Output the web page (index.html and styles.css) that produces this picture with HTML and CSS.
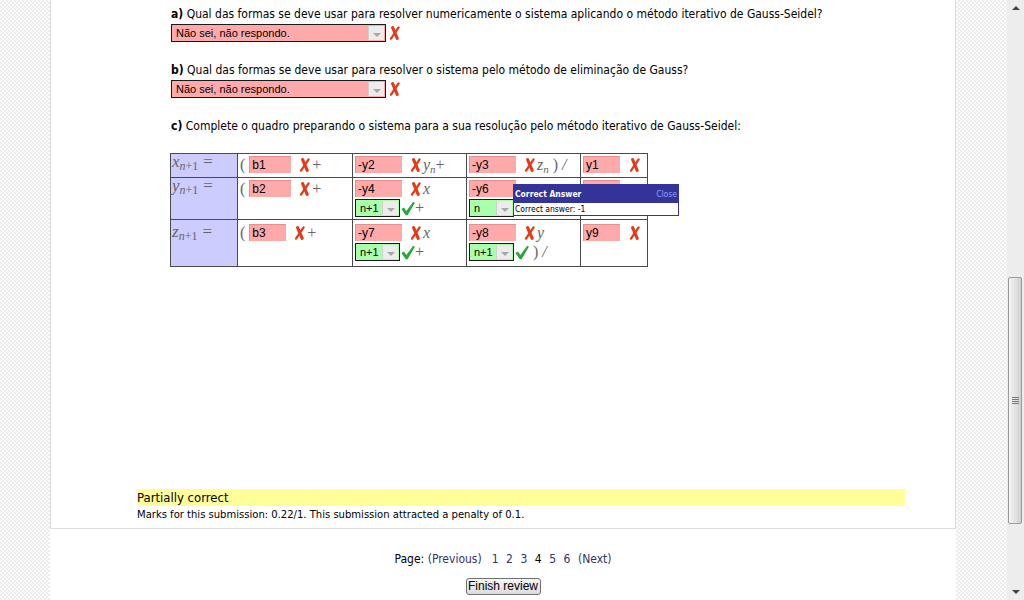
FILE: index.html
```html
<!DOCTYPE html>
<html lang="pt">
<head>
<meta charset="utf-8">
<title>Review</title>
<link rel="stylesheet" href="styles.css">
</head>
<body>
<svg class="defs" width="0" height="0" aria-hidden="true">
  <defs>
    <symbol id="ix" viewBox="0 0 11 14">
      <path d="M3.6 1.6 L8.2 12.4" stroke="#e43a18" stroke-width="3.1" stroke-linecap="round" fill="none"/>
      <path d="M9.6 1.4 L2.0 12.6" stroke="#e43a18" stroke-width="2.3" stroke-linecap="round" fill="none"/>
    </symbol>
    <symbol id="ic" viewBox="0 0 14 14">
      <path d="M0.4 7.4 L2.9 6.0 L5.4 9.4 L12.2 0.3 L13.9 1.2 L6.6 13.7 L4.7 13.7 Z" fill="#2aa63a"/>
    </symbol>
  </defs>
</svg>
<div class="gutter"></div>
<div class="page">
  <div class="que">
    <div class="formulation">
      <div class="part">
        <div class="qtext"><b>a)</b> Qual das formas se deve usar para resolver numericamente o sistema aplicando o método iterativo de Gauss-Seidel?</div>
        <div class="ansrow">
          <span class="sel sel-wide wrong"><span class="sel-txt">Não sei, não respondo.</span><span class="sel-arr"></span></span>
          <svg class="ic-x"><use href="#ix"/></svg>
        </div>
      </div>
      <div class="part">
        <div class="qtext"><b>b)</b> Qual das formas se deve usar para resolver o sistema pelo método de eliminação de Gauss?</div>
        <div class="ansrow">
          <span class="sel sel-wide wrong"><span class="sel-txt">Não sei, não respondo.</span><span class="sel-arr"></span></span>
          <svg class="ic-x"><use href="#ix"/></svg>
        </div>
      </div>
      <div class="part">
        <div class="qtext"><b>c)</b> Complete o quadro preparando o sistema para a sua resolução pelo método iterativo de Gauss-Seidel:</div>
      </div>
      <div class="tablewrap">
        <table class="grid">
          <tr class="r1">
            <td class="lhs"><span class="m"><i>x</i><sub><i>n</i>+1</sub><span class="eq">=</span></span></td>
            <td><div class="ln"><span class="m up par">(</span><span class="inp w42">b1</span><svg class="ic-x gap"><use href="#ix"/></svg><span class="m up">+</span></div></td>
            <td><div class="ln"><span class="inp w47">-y2</span><svg class="ic-x gap"><use href="#ix"/></svg><span class="m"><i>y</i><sub><i>n</i></sub></span><span class="m up">+</span></div></td>
            <td><div class="ln"><span class="inp w47">-y3</span><svg class="ic-x gap"><use href="#ix"/></svg><span class="m"><i>z</i><sub><i>n</i></sub></span><span class="m up">&nbsp;)</span><span class="m sl">&nbsp;/</span></div></td>
            <td><div class="ln"><span class="inp w37">y1</span><svg class="ic-x gap2"><use href="#ix"/></svg></div></td>
          </tr>
          <tr class="r2">
            <td class="lhs"><span class="m"><i>y</i><sub><i>n</i>+1</sub><span class="eq">=</span></span></td>
            <td><div class="ln"><span class="m up par">(</span><span class="inp w42">b2</span><svg class="ic-x gap"><use href="#ix"/></svg><span class="m up">+</span></div></td>
            <td>
              <div class="ln"><span class="inp w47">-y4</span><svg class="ic-x gap"><use href="#ix"/></svg><span class="m"><i>x</i></span></div>
              <div class="ln ln2"><span class="sel sel-sm right"><span class="sel-txt">n+1</span><span class="sel-arr"></span></span><svg class="ic-c"><use href="#ic"/></svg><span class="m up">+</span></div>
            </td>
            <td>
              <div class="ln"><span class="inp w47">-y6</span></div>
              <div class="ln ln2"><span class="sel sel-sm right"><span class="sel-txt">n</span><span class="sel-arr"></span></span></div>
            </td>
            <td><div class="ln"><span class="inp w37"></span></div></td>
          </tr>
          <tr class="r3">
            <td class="lhs"><span class="m"><i>z</i><sub><i>n</i>+1</sub><span class="eq">=</span></span></td>
            <td><div class="ln"><span class="m up par">(</span><span class="inp w37">b3</span><svg class="ic-x gap"><use href="#ix"/></svg><span class="m up">+</span></div></td>
            <td>
              <div class="ln"><span class="inp w47">-y7</span><svg class="ic-x gap"><use href="#ix"/></svg><span class="m"><i>x</i></span></div>
              <div class="ln ln2"><span class="sel sel-sm right"><span class="sel-txt">n+1</span><span class="sel-arr"></span></span><svg class="ic-c"><use href="#ic"/></svg><span class="m up">+</span></div>
            </td>
            <td>
              <div class="ln"><span class="inp w47">-y8</span><svg class="ic-x gap"><use href="#ix"/></svg><span class="m"><i>y</i></span></div>
              <div class="ln ln2"><span class="sel sel-sm right"><span class="sel-txt">n+1</span><span class="sel-arr"></span></span><svg class="ic-c"><use href="#ic"/></svg><span class="m up">&nbsp;)</span><span class="m sl">&nbsp;/</span></div>
            </td>
            <td><div class="ln"><span class="inp w37">y9</span><svg class="ic-x gap2"><use href="#ix"/></svg></div></td>
          </tr>
        </table>
        <div class="popup">
          <div class="popup-hd"><span class="popup-title">Correct Answer</span><span class="popup-close">Close</span></div>
          <div class="popup-bd">Correct answer: -1</div>
        </div>
      </div>
    </div>
    <div class="feedback">
      <div class="state">Partially correct</div>
      <div class="marks">Marks for this submission: 0.22/1. This submission attracted a penalty of 0.1.</div>
    </div>
  </div>
  <div class="nav">
    <div class="paging"><span class="lbl">Page:</span> <a class="lk">(Previous)</a><span class="sp"></span><a class="lk n">1</a><a class="lk n">2</a><a class="lk n">3</a><span class="cur n">4</span><a class="lk n">5</a><a class="lk n">6</a><a class="lk">(Next)</a></div>
    <div class="btnrow"><button class="btn" type="button">Finish review</button></div>
  </div>
</div>
<div class="gutter gutter-r"></div>
<div class="scrollbar">
  <div class="sb-arrow sb-up"></div>
  <div class="sb-track">
    <div class="sb-thumb"><span class="grip"></span></div>
  </div>
  <div class="sb-arrow sb-down"></div>
</div>
</body>
</html>
```

FILE: styles.css
```css
* { box-sizing: border-box; }
html, body { margin: 0; padding: 0; }
body {
  width: 1024px;
  height: 600px;
  overflow: hidden;
  display: flex;
  font-family: "DejaVu Sans Condensed", "DejaVu Sans", sans-serif;
  color: #000;
  background: #fff;
}
.defs { position: absolute; width: 0; height: 0; }

.gutter {
  width: 50px;
  flex: none;
  background: repeating-conic-gradient(#ececec 0 25%, #fbfbfb 0 50%) 0 0 / 4px 4px;
}
.gutter-r { width: 51px; }

.page {
  width: 906px;
  flex: none;
  background: #fff;
  display: flex;
  flex-direction: column;
}

.que {
  border: 1px solid #dcdcdc;
  border-top: none;
  padding: 6px 0 6px 0;
}
.formulation { padding-left: 120px; }
.part + .part { margin-top: 20px; }
.qtext {
  font-size: 12px;
  line-height: 16px;
  height: 16px;
  white-space: nowrap;
}
.qtext b { font-weight: bold; }
.ansrow {
  margin-top: 2px;
  display: flex;
  align-items: center;
  height: 18px;
}

.sel {
  display: inline-flex;
  align-items: stretch;
  border: 1px solid #1a1a1a;
  height: 18px;
  font-size: 11px;
  font-family: "Liberation Sans", Arial, sans-serif;
}
.sel.wrong { background: #ffaaaa; }
.sel.right { background: #aaffaa; }
.sel-wide { width: 215px; }
.sel-sm { width: 45px; }
.sel-txt {
  flex: 1;
  padding-left: 4px;
  line-height: 16px;
  white-space: nowrap;
  overflow: hidden;
}
.sel-arr {
  width: 16px;
  flex: none;
  background: #ececec;
  border-left: 1px solid #d0d0d0;
  margin: 1px;
  position: relative;
}
.sel-arr::after {
  content: "";
  position: absolute;
  left: 4px;
  top: 7px;
  border-left: 4px solid transparent;
  border-right: 4px solid transparent;
  border-top: 4px solid #a8a8a8;
}

.ic-x { width: 11px; height: 14px; flex: none; margin-left: 3px; }
.ic-c { width: 14px; height: 15px; flex: none; margin-left: 1px; }

.tablewrap { position: relative; margin-top: 19px; margin-left: -1px; width: 478px; }
.grid {
  border-collapse: collapse;
  font-size: 12px;
}
.grid td {
  border: 1px solid #4a4a4a;
  vertical-align: top;
  padding: 2px 2px 2px 2px;
}
.grid td:nth-child(1) { width: 67px; }
.grid td:nth-child(2) { width: 115px; }
.grid td:nth-child(3) { width: 114px; }
.grid td:nth-child(4) { width: 114px; }
.grid td:nth-child(5) { width: 67px; }
.grid tr.r1 td { height: 24px; }
.grid tr.r2 td { height: 42px; }
.grid tr.r3 td { height: 47px; }
.grid tr.r3 td { padding-top: 4px; }
.grid td.lhs { background: #ccccff; padding-top: 0; padding-left: 1px; }

.m {
  font-family: "Liberation Serif", "Times New Roman", serif;
  color: #666;
  font-size: 16px;
  line-height: 16px;
  white-space: nowrap;
}
.m i { font-style: italic; }
.m sub { font-size: 11px; vertical-align: -3px; line-height: 0; }
.m .eq { margin-left: 5px; font-size: 17px; }
.m.sl { font-style: italic; }
.lhs .m { font-size: 17px; }
.lhs .m sub { font-size: 12px; }
.par { margin-right: 4px; }

.ln {
  display: flex;
  align-items: center;
  height: 17px;
  white-space: nowrap;
}
.ln2 { margin-top: 2px; height: 18px; }

.inp {
  display: inline-block;
  height: 17px;
  background: #ffaaaa;
  border-top: 1px solid #e88e8e;
  border-left: 1px solid #e88e8e;
  font-size: 12px;
  line-height: 16px;
  padding-left: 2px;
  font-family: "Liberation Sans", Arial, sans-serif;
}
.w42 { width: 42px; }
.w47 { width: 47px; }
.w37 { width: 37px; }
.gap { margin-left: 8px; margin-right: 2px; }
.gap2 { margin-left: 9px; }

.popup {
  position: absolute;
  left: 343px;
  top: 31px;
  width: 166px;
  border: 1px solid #333399;
  background: #fff;
  font-family: "DejaVu Sans Condensed", "DejaVu Sans", sans-serif;
}
.popup-hd {
  background: #333399;
  height: 18px;
  display: flex;
  align-items: center;
  justify-content: space-between;
  padding: 0 1px 0 1px;
}
.popup-title { color: #fff; font-weight: bold; font-size: 8.5px; }
.popup-close { color: #9999ff; font-size: 8.5px; }
.popup-bd {
  font-size: 8.5px;
  height: 12px;
  line-height: 12px;
  padding-left: 1px;
}

.feedback {
  margin-top: 222px;
  margin-left: 86px;
  width: 768px;
}
.state {
  background: #ffff99;
  height: 17px;
  line-height: 17px;
  font-size: 13px;
}
.marks {
  margin-top: 2px;
  font-size: 11.15px;
  line-height: 14px;
}

.nav {
  margin-top: 23px;
  text-align: center;
  font-size: 12px;
}
.paging { line-height: 14px; }
.lk { color: #333366; text-decoration: none; }
.sp { display: inline-block; width: 10px; }
.n { margin-right: 7.5px; }
.cur { color: #000; }
.btnrow { margin-top: 12px; }
.btn {
  font-family: "Liberation Sans", Arial, sans-serif;
  font-size: 12px;
  height: 17px;
  width: 75px;
  padding: 0;
  border: 1px solid #707070;
  border-radius: 3px;
  background: linear-gradient(#f6f6f6, #dcdcdc);
  color: #000;
  line-height: 15px;
}

.scrollbar {
  width: 17px;
  flex: none;
  background: #ededed;
  display: flex;
  flex-direction: column;
}
.sb-arrow { height: 17px; flex: none; position: relative; }
.sb-arrow::after {
  content: "";
  position: absolute;
  left: 5px;
  border-left: 4px solid transparent;
  border-right: 4px solid transparent;
}
.sb-up::after { top: 6px; border-bottom: 4px solid #444; }
.sb-down::after { top: 7px; border-top: 4px solid #444; }
.sb-track { flex: 1; padding-top: 260px; padding-bottom: 59px; padding-left: 1px; padding-right: 2px; }
.sb-thumb {
  height: 100%;
  border: 1px solid #9a9a9a;
  border-radius: 2px;
  background: linear-gradient(90deg, #f4f4f4, #e0e0e0 60%, #cfcfcf);
  display: flex;
  align-items: center;
  justify-content: center;
}
.grip {
  width: 7px;
  height: 7px;
  background: repeating-linear-gradient(#777 0 1px, transparent 1px 2px);
}
```
